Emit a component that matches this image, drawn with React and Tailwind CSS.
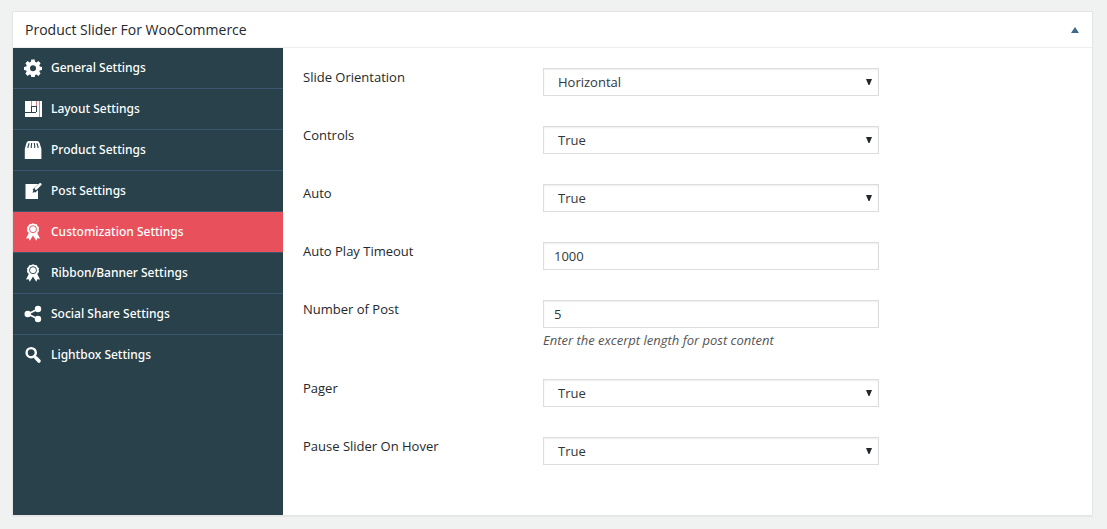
import React from "react";

function GearIcon() {
  return (
    <svg viewBox="0 0 18 18" className="size-[18px] shrink-0" fill="currentColor" aria-hidden="true">
      <path
        fillRule="evenodd"
        d="M7.3 0.5h3.4l.4 2.3 1.3.6 2-1.4 2.2 2.3-1.3 2 .5 1.2 2.2.4v3l-2.2.5-.5 1.2 1.3 2-2.2 2.3-2-1.4-1.3.6-.4 2.3H7.3l-.4-2.3-1.3-.6-2 1.4-2.2-2.3 1.3-2-.5-1.2L0 10.900v-3l2.2-.4.5-1.2-1.3-2L3.600 2l2 1.4 1.3-.6zM9 6.200a3 3 0 1 0 0 6 3 3 0 0 0 0-6z"
      />
    </svg>
  );
}

function LayoutIcon() {
  return (
    <svg viewBox="0 0 18 18" className="size-[18px] shrink-0" aria-hidden="true" shapeRendering="crispEdges">
      <path fill="#fff" d="M1 1h17v16H1z" />
      <path fill="#e0808c" d="M7 1h1v5H7zM12 1h1v5h-1zM15 1h1v16h-1z" />
      <path fill="#28414a" d="M7 6h1v6H7zM8 6h5v1H8zM1 12h11v1H1zM12 7h1v5h-1z" />
    </svg>
  );
}

function BagIcon() {
  return (
    <svg viewBox="0 0 18 18" className="size-[18px] shrink-0" aria-hidden="true">
      <path fill="#fff" d="M5 0h8q2 0 2.500 1.800L17 6.500q.4.800.4 2V18H.8V8.500q0-1.200.4-2l1.300-4.700Q3 0 5 0z" />
      <path
        fill="none"
        stroke="#28414a"
        strokeWidth="1.100"
        d="M5.200 2.300 4 5.500V7M7.700 2 7.300 5v2M10.300 2l.4 3v2M12.800 2.300 14 5.500V7"
      />
    </svg>
  );
}

function EditIcon() {
  return (
    <svg viewBox="0 0 18 18" className="size-[18px] shrink-0" aria-hidden="true">
      <path fill="#fff" d="M1.500 2H14v15H1.500z" />
      <path stroke="#28414a" strokeWidth="4" d="M10 9 18 1.500" />
      <path stroke="#fff" strokeWidth="2.600" strokeLinecap="round" d="M12 6.500 16.300 2.300" />
      <path fill="#28414a" d="M9.500 8 11.500 10 8.500 10.800z" />
    </svg>
  );
}

function AwardIcon({ ring }) {
  return (
    <svg viewBox="0 0 18 18" className="size-[18px] shrink-0" aria-hidden="true">
      <path
        fill="#fff"
        d="M4.800 10 2 15.500l2.600-.3L5.800 17.800 9 12.500l3.200 5.300 1.200-2.600 2.600.3-2.800-5.500z"
      />
      <path
        fill="#fff"
        d="M9 .3 10.800 1l2 .2.8 1.800 1.400 1.300-.3 1.900.3 1.900-1.400 1.300-.8 1.800-2 .2L9 12.200l-1.800-.8-2-.2-.8-1.800L3 8.100l.3-1.900L3 4.300 4.400 3l.8-1.800 2-.2z"
      />
      <circle cx="9" cy="6.200" r="3.500" fill="none" stroke={ring} strokeWidth=".9" />
    </svg>
  );
}

function ShareIcon() {
  return (
    <svg viewBox="0 0 18 18" className="size-[18px] shrink-0" aria-hidden="true">
      <path fill="none" stroke="#fff" strokeWidth="1.800" d="M14 4 4 9l10 5" />
      <g fill="#fff">
        <circle cx="14" cy="4" r="3.200" />
        <circle cx="3.700" cy="9" r="3.200" />
        <circle cx="14" cy="14" r="3.200" />
      </g>
    </svg>
  );
}

function SearchIcon() {
  return (
    <svg viewBox="0 0 18 18" className="size-[18px] shrink-0" fill="none" stroke="currentColor" aria-hidden="true">
      <circle cx="7.200" cy="6.700" r="4.600" strokeWidth="2.400" />
      <path strokeWidth="3.600" strokeLinecap="round" d="m11.800 11.800 3.200 3.200" />
    </svg>
  );
}

const menu = [
  { label: "General Settings", icon: <GearIcon /> },
  { label: "Layout Settings", icon: <LayoutIcon /> },
  { label: "Product Settings", icon: <BagIcon /> },
  { label: "Post Settings", icon: <EditIcon /> },
  { label: "Customization Settings", icon: <AwardIcon ring="#e8505b" />, active: true },
  { label: "Ribbon/Banner Settings", icon: <AwardIcon ring="#28414a" /> },
  { label: "Social Share Settings", icon: <ShareIcon /> },
  { label: "Lightbox Settings", icon: <SearchIcon /> },
];

const fields = [
  { id: "orientation", label: "Slide Orientation", options: ["Horizontal", "Vertical"] },
  { id: "controls", label: "Controls", options: ["True", "False"] },
  { id: "auto", label: "Auto", options: ["True", "False"] },
  { id: "timeout", label: "Auto Play Timeout", value: "1000" },
  { id: "posts", label: "Number of Post", value: "5", help: "Enter the excerpt length for post content" },
  { id: "pager", label: "Pager", options: ["True", "False"] },
  { id: "pause", label: "Pause Slider On Hover", options: ["True", "False"] },
];

const control =
  "block h-7 w-full appearance-none rounded-none border border-[#ddd] bg-white text-[13px] leading-5 text-[#32373c] shadow-[inset_0_1px_2px_rgba(0,0,0,0.07)] outline-none";

function Field({ field }) {
  return (
    <div className="flex">
      <label htmlFor={field.id} className="w-60 shrink-0 text-[13px] leading-[18px] text-[#23282d]">
        {field.label}
      </label>
      <div className="w-full max-w-84">
        {field.options ? (
          <div className="relative">
            <select id={field.id} className={control + " pr-6 pl-[14px]"}>
              {field.options.map((o) => (
                <option key={o}>{o}</option>
              ))}
            </select>
            <svg
              viewBox="0 0 6 6"
              className="pointer-events-none absolute top-[11px] right-[7px] size-[6px] fill-[#23282d]"
              aria-hidden="true"
            >
              <path d="M0 0h6L3.500 6h-1z" />
            </svg>
          </div>
        ) : (
          <input id={field.id} type="text" defaultValue={field.value} className={control + " px-[10px]"} />
        )}
        {field.help && <p className="pt-[3px] text-[13px] leading-[18px] text-[#555] italic">{field.help}</p>}
      </div>
    </div>
  );
}

export default function App() {
  return (
    <div className="min-h-screen bg-[#f0f1f1] px-3 pt-[11px] pb-[13px] font-['Open_Sans','Noto_Sans',sans-serif]">
      <section className="mr-[2px] border border-[#e5e5e5] bg-white shadow-[0_1px_1px_rgba(0,0,0,0.04)]">
        <header className="flex h-9 items-center justify-between border-b border-[#eee] pr-[13px] pl-3">
          <h2 className="text-sm leading-5 text-[#23282d]">Product Slider For WooCommerce</h2>
          <button type="button" aria-label="Toggle panel" className="p-0">
            <svg viewBox="0 0 8 6" className="h-[6px] w-2 fill-[#3f6a8a]" aria-hidden="true">
              <path d="M4 0 8 6H0z" />
            </svg>
          </button>
        </header>
        <div className="flex">
          <nav className="w-[270px] shrink-0 bg-[#28414a] font-['Noto_Sans','Open_Sans',sans-serif]">
            <ul>
              {menu.map((m, i) => (
                <li key={m.label} className={i < menu.length - 1 ? "border-b border-[#3b5670]" : ""}>
                  <a
                    href="#"
                    className={
                      "flex h-10 items-center gap-[9px] pl-[11px] text-xs leading-5 font-medium text-white " +
                      (m.active ? "bg-[#e8505b]" : "")
                    }
                  >
                    {m.icon}
                    {m.label}
                  </a>
                </li>
              ))}
            </ul>
          </nav>
          <form className="flex min-w-0 flex-1 flex-col gap-[30px] px-5 pt-5 pb-[50px]">
            {fields.map((f) => (
              <Field key={f.id} field={f} />
            ))}
          </form>
        </div>
      </section>
    </div>
  );
}
